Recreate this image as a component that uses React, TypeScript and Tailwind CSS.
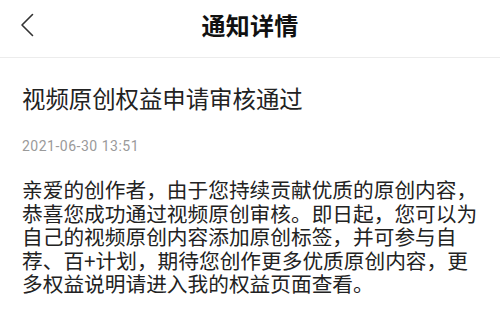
import React from 'react';

const cjk = { fontFamily: '"Noto Sans CJK SC", "Noto Sans", sans-serif' };

const BackIcon = () => (
    <svg width="14" height="24" viewBox="0 0 14 24" fill="none" className="text-[#333]">
        <path d="M12.5 1.5 L2 12 L12.5 22.5" stroke="currentColor" strokeWidth="1.6" strokeLinecap="round" strokeLinejoin="round" />
    </svg>
);

export default function App() {
    return (
        <div className="w-[500px] h-[320px] overflow-hidden bg-white" style={cjk}>
            {/* Header */}
            <div className="h-[58px] grid grid-cols-[1fr_auto_1fr] items-center border-b border-[#ececec] pb-[7px]">
                <div className="pl-[20px] flex items-center">
                    <BackIcon />
                </div>
                <h1 className="text-[24px] font-bold text-[#111] leading-none tracking-[0.3px]">通知详情</h1>
                <div />
            </div>

            {/* 内容 */}
            <div className="px-[22px]">
                <h2 className="mt-[26px] text-[23.4px] leading-[28px] text-[#222]">视频原创权益申请审核通过</h2>
                <p
                    className="mt-[25px] text-[14px] leading-[18px] tracking-[0.5px] text-[#9a9a9a]"
                    style={{ fontFamily: 'Roboto, "Noto Sans", sans-serif' }}
                >
                    2021-06-30 13:51
                </p>
                <p className="mt-[23px] w-[457px] text-[20.7px] leading-[23.6px] text-[#222]">
                    亲爱的创作者，由于您持续贡献优质的原创内容，恭喜您成功通过视频原创审核。即日起，您可以为自己的视频原创内容添加原创标签，并可参与自荐、百+计划，期待您创作更多优质原创内容，更多权益说明请进入我的权益页面查看。
                </p>
            </div>
        </div>
    );
}
